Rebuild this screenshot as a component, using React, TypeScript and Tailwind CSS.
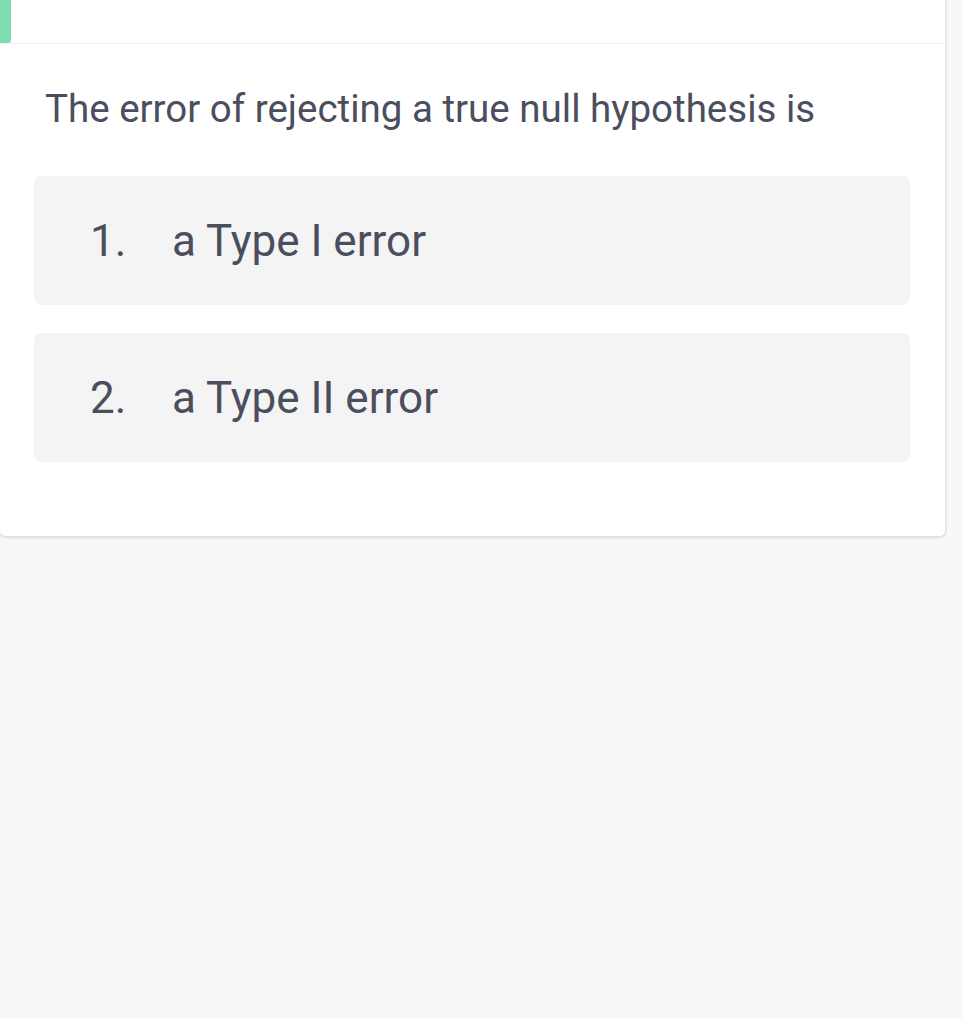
import React from 'react';

const options = ['a Type I error', 'a Type II error'];

const App: React.FC = () => {
  return (
    <div className="min-h-screen bg-[#f8f8f8] font-['Roboto',sans-serif]">
      <div className="w-[946px] bg-white border-r border-b border-[#e2e2e2] rounded-br-md rounded-bl-md shadow-sm">
        {/* header strip */}
        <div className="h-[44px] flex border-b border-[#f0f0f0]">
          <div className="w-[11px] h-[43px] bg-[#7edcb1] rounded-br-[3px]"></div>
        </div>

        <div className="pt-[41px] pb-[74px]">
          <p className="pl-[45px] text-[38.5px] leading-[48px] text-[#4b4e5c]">
            The error of rejecting a true null hypothesis is
          </p>

          <div className="mt-[43px] flex flex-col gap-[28px] pl-[34px] pr-[35px]">
            {options.map((opt, i) => (
              <div
                key={opt}
                className="h-[129px] flex items-center pl-[56px] bg-[#f4f4f4] rounded-lg text-[44px] text-[#4b4e5c]"
              >
                <span className="w-[82px]">{i + 1}.</span>
                <span>{opt}</span>
              </div>
            ))}
          </div>
        </div>
      </div>
    </div>
  );
};

export default App;
